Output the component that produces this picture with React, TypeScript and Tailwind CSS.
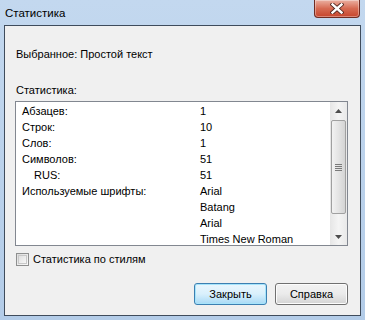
import React from 'react';

const rows: { label: string; value: string; indent?: boolean }[] = [
  { label: 'Абзацев:', value: '1' },
  { label: 'Строк:', value: '10' },
  { label: 'Слов:', value: '1' },
  { label: 'Символов:', value: '51' },
  { label: 'RUS:', value: '51', indent: true },
  { label: 'Используемые шрифты:', value: 'Arial' },
  { label: '', value: 'Batang' },
  { label: '', value: 'Arial' },
  { label: '', value: 'Times New Roman' },
];

const Arrow: React.FC<{ down?: boolean }> = ({ down }) => (
  <div className="h-[17px] flex items-center justify-center">
    <svg width="7" height="4" viewBox="0 0 7 4">
      {down ? <polygon points="0,0 7,0 3.5,4" fill="#4d4d4d" /> : <polygon points="0,4 7,4 3.5,0" fill="#4d4d4d" />}
    </svg>
  </div>
);

const App: React.FC = () => {
  return (
    <div
      className="w-[365px] h-[320px] flex flex-col bg-gradient-to-b from-[#c3d8ef] to-[#b3cce8] text-[11px] text-black overflow-hidden"
      style={{ fontFamily: '"Liberation Sans", Arial, sans-serif' }}
    >
      {/* Title bar */}
      <div className="h-[25px] flex justify-between shrink-0">
        <span className="pl-[5px] pt-[5px] text-[11.5px] leading-[16px]">Статистика</span>
        <div className="mr-[5px] w-[46px] h-[18px] rounded-b-[4px] border border-t-0 border-[#6f2b22] bg-gradient-to-b from-[#eab0a2] via-[#d66a52] to-[#c6442c] shadow-[inset_0_0_0_1px_rgba(255,255,255,0.35)] flex items-center justify-center">
          <svg width="14" height="11" viewBox="0 0 14 11">
            <path d="M2.5 1.5 L11.5 9.5 M11.5 1.5 L2.5 9.5" stroke="#4f241d" strokeWidth="4.2" strokeLinecap="square" />
            <path d="M2.5 1.5 L11.5 9.5 M11.5 1.5 L2.5 9.5" stroke="#ffffff" strokeWidth="2.4" strokeLinecap="square" />
          </svg>
        </div>
      </div>

      {/* Client area */}
      <div className="mx-[4px] h-[291px] border border-[#3f4c5c] bg-[#f0f0f0] flex flex-col pl-[10px] pr-[12px]">
        <div className="mt-[20px] ml-[1px] leading-[16px]">Выбранное: Простой текст</div>
        <div className="mt-[20px] ml-[1px] leading-[16px]">Статистика:</div>

        <div className="mt-[3px] h-[145px] border border-[#828790] bg-white flex overflow-hidden">
          <div className="flex-1 pl-[6px] pt-[1px]">
            {rows.map((r, i) => (
              <div key={i} className="grid grid-cols-[178px_1fr] h-[16px] leading-[16px]">
                <span className={r.indent ? 'pl-[12px]' : ''}>{r.label}</span>
                <span>{r.value}</span>
              </div>
            ))}
          </div>
          {/* Scrollbar */}
          <div className="w-[17px] bg-gradient-to-r from-[#e6e6e6] via-[#f4f4f4] to-[#e9e9e9] flex flex-col">
            <Arrow />
            <div className="mx-[1px] mt-[1px] h-[94px] rounded-[2px] border border-[#a0a0a0] bg-gradient-to-r from-[#f2f2f2] via-[#e4e4e4] to-[#d4d4d4] flex items-center justify-center">
              <div className="flex flex-col gap-[1px]">
                <div className="w-[7px] h-[1px] bg-[#7a7a7a]" />
                <div className="w-[7px] h-[1px] bg-[#7a7a7a]" />
                <div className="w-[7px] h-[1px] bg-[#7a7a7a]" />
                <div className="w-[7px] h-[1px] bg-[#7a7a7a]" />
              </div>
            </div>
            <div className="flex-1" />
            <Arrow down />
          </div>
        </div>

        <label className="mt-[5px] h-[16px] flex items-center gap-[4px]">
          <span className="ml-[1px] w-[13px] h-[13px] border border-[#8e8f8f] bg-gradient-to-br from-[#dcdcdc] to-[#fafafa] flex items-center justify-center">
            <span className="w-[9px] h-[9px] bg-gradient-to-br from-[#e0e0e0] to-[#f7f7f7] border border-[#c8c8c8]" />
          </span>
          <span className="leading-[16px]">Статистика по стилям</span>
        </label>

        <div className="mt-[16px] flex justify-end gap-[8px]">
          <button className="w-[73px] h-[22px] rounded-[3px] border border-[#3c7fb1] bg-gradient-to-b from-[#eaf6fd] via-[#d9f0fc] to-[#a7d9f5] shadow-[inset_0_0_0_1px_#a6e4fb] leading-[16px]">
            Закрыть
          </button>
          <button className="w-[73px] h-[22px] rounded-[3px] border border-[#707070] bg-gradient-to-b from-[#f2f2f2] via-[#ebebeb] to-[#d3d3d3] shadow-[inset_0_0_0_1px_#fcfcfc] leading-[16px]">
            Справка
          </button>
        </div>
      </div>
    </div>
  );
};

export default App;
